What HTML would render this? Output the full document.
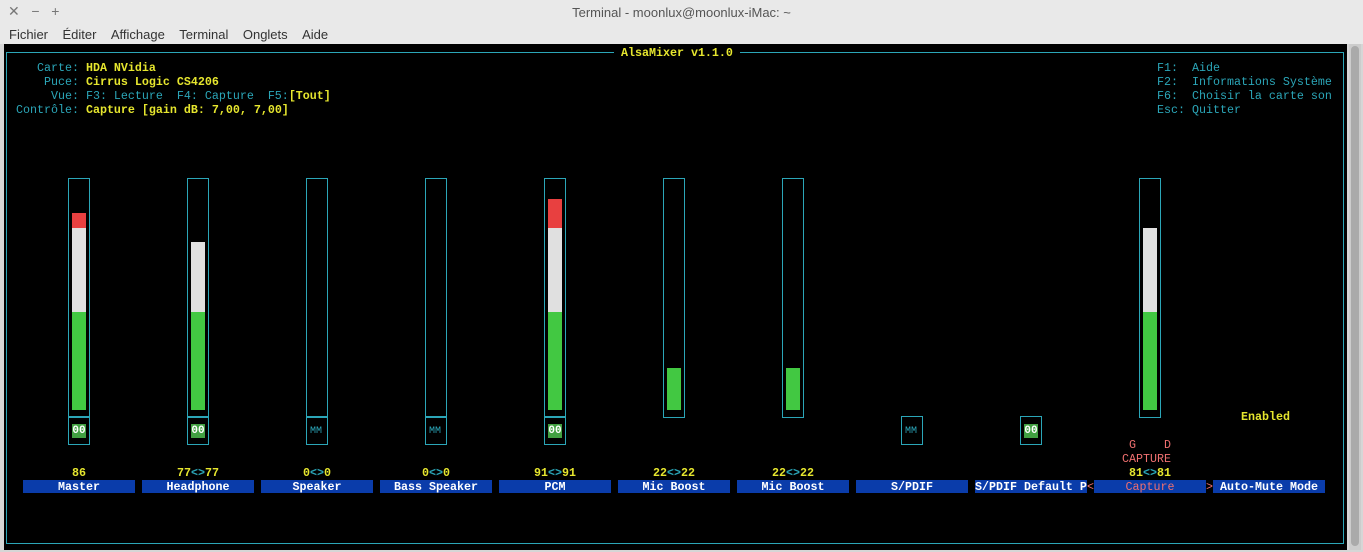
<!DOCTYPE html>
<html><head><meta charset="utf-8"><style>
body{margin:0;width:1363px;height:552px;background:#d6d6d6;position:relative;overflow:hidden;font-family:"Liberation Sans",sans-serif}
.t{position:absolute;font-family:"Liberation Mono",monospace;font-size:11.67px;line-height:14px;white-space:pre}
.c{color:#2ba6b8}.y{color:#e6e62e;font-weight:bold}.w{color:#fff;font-weight:bold}.r{color:#f07070}
.a{position:absolute}
.bar{position:absolute;border:1px solid #2ba6b8;width:20px;top:178px;height:238px}
.mb{position:absolute;border:1px solid #2ba6b8;width:20px;top:416px;height:27px}
.lab{position:absolute;top:480px;height:13px;width:112px;background:#0a3caa;color:#fff;font-family:"Liberation Mono",monospace;font-size:11.67px;font-weight:bold;line-height:14px;text-align:center}
.val{position:absolute;top:466px;width:112px;text-align:center;font-family:"Liberation Mono",monospace;font-size:11.67px;line-height:14px;color:#e6e62e;font-weight:bold}
.g{background:#42c842}.wh{background:#e0e0e0}.rd{background:#e84040}
.oo{position:absolute;width:14px;height:14px;background:#42a042;color:#fff;font-family:"Liberation Mono",monospace;font-size:11px;font-weight:bold;line-height:15px;text-align:center}
.mm{position:absolute;color:#2ba6b8;font-family:"Liberation Mono",monospace;font-size:10px;line-height:15px}
</style></head><body>
<div class="a" style="left:0;top:0;width:1363px;height:44px;background:#e9e9e9"></div>
<div class="a" style="left:8px;top:3px;font-size:14px;color:#777">✕&nbsp;&nbsp;&nbsp;−&nbsp;&nbsp;&nbsp;+</div>
<div class="a" style="left:0;width:1363px;top:5px;text-align:center;font-size:13px;color:#555">Terminal - moonlux@moonlux-iMac: ~</div>
<div class="a" style="left:9px;top:27px;font-size:13px;color:#333;word-spacing:0">Fichier&nbsp;&nbsp;&nbsp;&nbsp;Éditer&nbsp;&nbsp;&nbsp;&nbsp;Affichage&nbsp;&nbsp;&nbsp;&nbsp;Terminal&nbsp;&nbsp;&nbsp;&nbsp;Onglets&nbsp;&nbsp;&nbsp;&nbsp;Aide</div>
<div class="a" style="left:4px;top:44px;width:1343px;height:506px;background:#000"></div>
<div class="a" style="left:1349px;top:44px;width:12px;height:506px;background:#ccc"></div>
<div class="a" style="left:1351px;top:46px;width:8px;height:500px;background:#aaa;border-radius:4px"></div>
<div class="a" style="left:6px;top:52px;width:1336px;height:490px;border:1px solid #2ba6b8"></div>
<div class="t w" style="left:614px;top:46px;background:#000;color:#e6e62e"> AlsaMixer v1.1.0 </div>
<div class="t" style="left:16px;top:61px"><span class="c">   Carte: </span><span class="y">HDA NVidia</span>
<span class="c">    Puce: </span><span class="y">Cirrus Logic CS4206</span>
<span class="c">     Vue: F3: Lecture  F4: Capture  F5:</span><span class="y">[Tout]</span>
<span class="c">Contrôle: </span><span class="y">Capture [gain dB: 7,00, 7,00]</span></div>
<div class="t c" style="left:1157px;top:61px">F1:  Aide
F2:  Informations Système
F6:  Choisir la carte son
Esc: Quitter</div>

<div class="bar" style="left:68px"></div>
<div class="a rd" style="left:72px;top:213px;width:14px;height:15px"></div>
<div class="a wh" style="left:72px;top:228px;width:14px;height:84px"></div>
<div class="a g" style="left:72px;top:312px;width:14px;height:98px"></div>
<div class="mb" style="left:68px"></div><div class="oo" style="left:72px;top:424px">00</div>

<div class="bar" style="left:187px"></div>
<div class="a wh" style="left:191px;top:242px;width:14px;height:70px"></div>
<div class="a g" style="left:191px;top:312px;width:14px;height:98px"></div>
<div class="mb" style="left:187px"></div><div class="oo" style="left:191px;top:424px">00</div>

<div class="bar" style="left:306px"></div>
<div class="mb" style="left:306px"></div><div class="mm" style="left:310px;top:424px">MM</div>
<div class="bar" style="left:425px"></div>
<div class="mb" style="left:425px"></div><div class="mm" style="left:429px;top:424px">MM</div>

<div class="bar" style="left:544px"></div>
<div class="a rd" style="left:548px;top:199px;width:14px;height:29px"></div>
<div class="a wh" style="left:548px;top:228px;width:14px;height:84px"></div>
<div class="a g" style="left:548px;top:312px;width:14px;height:98px"></div>
<div class="mb" style="left:544px"></div><div class="oo" style="left:548px;top:424px">00</div>

<div class="bar" style="left:663px"></div>
<div class="a g" style="left:667px;top:368px;width:14px;height:42px"></div>
<div class="bar" style="left:782px"></div>
<div class="a g" style="left:786px;top:368px;width:14px;height:42px"></div>

<div class="mb" style="left:901px"></div><div class="mm" style="left:905px;top:424px">MM</div>
<div class="mb" style="left:1020px"></div><div class="oo" style="left:1024px;top:424px">00</div>

<div class="bar" style="left:1139px"></div>
<div class="a wh" style="left:1143px;top:228px;width:14px;height:84px"></div>
<div class="a g" style="left:1143px;top:312px;width:14px;height:98px"></div>

<div class="t y" style="left:1241px;top:410px">Enabled</div>
<div class="t r" style="left:1129px;top:438px">G    D</div>
<div class="t r" style="left:1122px;top:452px">CAPTURE</div>

<div class="val" style="left:23px">86</div>
<div class="val" style="left:142px">77<span class="c">&lt;&gt;</span>77</div>
<div class="val" style="left:261px">0<span class="c">&lt;&gt;</span>0</div>
<div class="val" style="left:380px">0<span class="c">&lt;&gt;</span>0</div>
<div class="val" style="left:499px">91<span class="c">&lt;&gt;</span>91</div>
<div class="val" style="left:618px">22<span class="c">&lt;&gt;</span>22</div>
<div class="val" style="left:737px">22<span class="c">&lt;&gt;</span>22</div>
<div class="val" style="left:1094px">81<span class="c">&lt;&gt;</span>81</div>

<div class="lab" style="left:23px">Master</div>
<div class="lab" style="left:142px">Headphone</div>
<div class="lab" style="left:261px">Speaker</div>
<div class="lab" style="left:380px">Bass Speaker</div>
<div class="lab" style="left:499px">PCM</div>
<div class="lab" style="left:618px">Mic Boost</div>
<div class="lab" style="left:737px">Mic Boost</div>
<div class="lab" style="left:856px">S/PDIF</div>
<div class="lab" style="left:975px;text-align:left">S/PDIF Default P</div>
<div class="t r" style="left:1087px;top:480px">&lt;</div>
<div class="lab" style="left:1094px;color:#f07070;font-weight:normal">Capture</div>
<div class="t r" style="left:1206px;top:480px">&gt;</div>
<div class="lab" style="left:1213px">Auto-Mute Mode</div>
</body></html>
